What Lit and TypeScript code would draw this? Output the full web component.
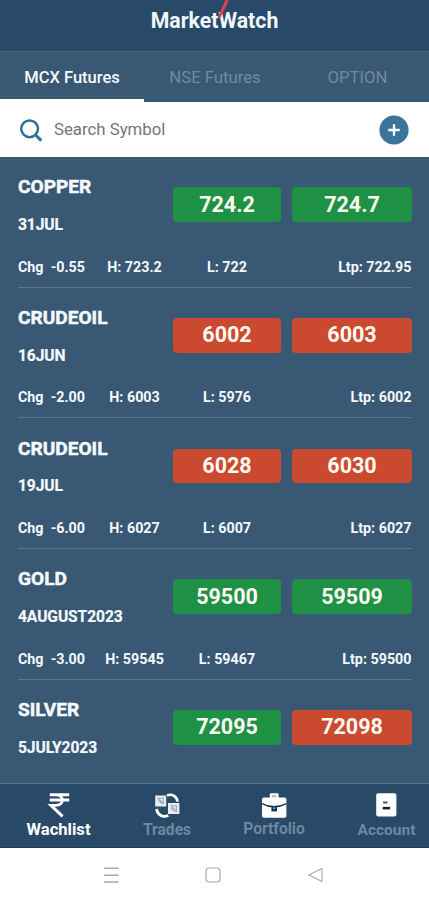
import { LitElement, html, css, svg } from "lit";
import { customElement, property } from "lit/decorators.js";
import { classMap } from "lit/directives/class-map.js";

interface Quote {
  symbol: string;
  expiry: string;
  bid: string;
  ask: string;
  bidUp: boolean;
  askUp: boolean;
  chg: string;
  high: string;
  low: string;
  ltp: string;
}

const QUOTES: Quote[] = [
  { symbol: "COPPER", expiry: "31JUL", bid: "724.2", ask: "724.7", bidUp: true, askUp: true, chg: "-0.55", high: "723.2", low: "722", ltp: "722.95" },
  { symbol: "CRUDEOIL", expiry: "16JUN", bid: "6002", ask: "6003", bidUp: false, askUp: false, chg: "-2.00", high: "6003", low: "5976", ltp: "6002" },
  { symbol: "CRUDEOIL", expiry: "19JUL", bid: "6028", ask: "6030", bidUp: false, askUp: false, chg: "-6.00", high: "6027", low: "6007", ltp: "6027" },
  { symbol: "GOLD", expiry: "4AUGUST2023", bid: "59500", ask: "59509", bidUp: true, askUp: true, chg: "-3.00", high: "59545", low: "59467", ltp: "59500" },
  { symbol: "SILVER", expiry: "5JULY2023", bid: "72095", ask: "72098", bidUp: true, askUp: false, chg: "", high: "", low: "", ltp: "" },
];

@customElement("quote-row")
export class QuoteRow extends LitElement {
  @property({ attribute: false }) quote!: Quote;

  static styles = css`
    :host {
      display: block;
      flex: none;
      box-sizing: border-box;
      height: 130.67px;
      padding: 0 17.5px 0 18px;
      color: #f4f9fd;
      font-weight: 700;
    }
    .row {
      height: 100%;
      box-sizing: border-box;
      border-bottom: 1px solid #587591;
      display: flex;
      flex-direction: column;
    }
    .top {
      display: grid;
      grid-template-columns: 155.3px 107.4px 131px;
      height: 97.7px;
      padding-top: 18.4px;
      box-sizing: border-box;
    }
    .symbol {
      font-size: 19.1px;
      line-height: 24px;
      -webkit-text-stroke: 0.5px #f4f9fd;
    }
    .expiry {
      font-size: 15.6px;
      line-height: 20px;
      margin-top: 15.6px;
      letter-spacing: -0.08px;
      -webkit-text-stroke: 0.2px #f4f9fd;
    }
    .price {
      margin-top: 12.1px;
      height: 34.6px;
      border-radius: 4px;
      background: #cb4a2f;
      display: flex;
      align-items: center;
      justify-content: center;
      font-size: 21.5px;
      line-height: 26px;
      color: #fdfaf4;
    }
    .ask {
      margin-left: 11.6px;
    }
    .up {
      background: #1e9145;
    }
    .stats {
      display: grid;
      grid-template-columns: 70px 93px 92px 1fr;
      font-size: 14.3px;
      line-height: 24px;
      white-space: pre;
    }
    .mid {
      text-align: center;
    }
    .ltp {
      text-align: right;
    }
  `;

  render() {
    const q = this.quote;
    return html`
      <div class="row">
        <div class="top">
          <div>
            <div class="symbol">${q.symbol}</div>
            <div class="expiry">${q.expiry}</div>
          </div>
          <div class=${classMap({ price: true, up: q.bidUp })}>${q.bid}</div>
          <div class=${classMap({ price: true, ask: true, up: q.askUp })}>${q.ask}</div>
        </div>
        ${q.chg
          ? html`<div class="stats">
              <span>Chg  ${q.chg}</span><span class="mid">H: ${q.high}</span><span class="mid">L: ${q.low}</span><span class="ltp">Ltp: ${q.ltp}</span>
            </div>`
          : null}
      </div>
    `;
  }
}

const rupee = svg`<path d="M3.7 1.8H23.2M3.7 7H23.2M3.7 1.8H10C18.4 1.8 18.4 12.4 10 12.4H5L16.6 23.4" fill="none" stroke="#fff" stroke-width="2.9"/>`;

const trades = svg`
  <path d="M13 2.4C18 .4 23 3.4 23.6 8.6M2.6 16C3.2 21.6 8.5 25 14.4 22.4" fill="none" stroke="#fff" stroke-width="2.7"/>
  <path d="M1.2 2.6H12.2V13.4H1.2ZM14 10H25.4V21H14Z" fill="#e8edf2"/>
  <path d="M4 5.2H9.4V10.4ZM4.2 7.4L8.4 11.2M17 12.8H22.4V18.2ZM17 15L21 18.8" fill="none" stroke="#9aa9b8" stroke-width="1.1"/>`;

const briefcase = svg`
  <path d="M8.8 4.5V1.2Q8.8.2 9.8.2H16.6Q17.6.2 17.6 1.2V4.5H23.6Q25.4 4.5 25.4 6.3V23Q25.4 24.8 23.6 24.8H2.8Q1 24.8 1 23V6.3Q1 4.5 2.8 4.5Z" fill="#fff"/>
  <path d="M10.8 2.2H15.6V4.2H10.8Z" fill="#aebac6"/>
  <path d="M1 10.6Q7 13.8 13.2 13.8T25.4 10.6" fill="none" stroke="#1c3753" stroke-width="1.4"/>
  <path d="M10.4 13.2H16V18.4H10.4Z" fill="#163653"/>
  <path d="M12.2 14.4H14.2V16H12.2Z" fill="#9aabba"/>`;

const account = svg`
  <rect x="2.2" y=".2" width="20.2" height="23.2" rx="2" fill="#fff"/>
  <path d="M9.1 8.4H13.5V10.6H9.1Z" fill="#53616f"/>
  <path d="M8.7 13.9H16.1V16.4H8.7Z" fill="#14202c"/>`;

@customElement("app-root")
export class AppRoot extends LitElement {
  static styles = css`
    :host {
      display: flex;
      flex-direction: column;
      position: relative;
      width: 429px;
      height: 900px;
      overflow: hidden;
      background: #395873;
      font-family: Roboto, "Liberation Sans", sans-serif;
    }
    .header {
      flex: none;
      height: 52px;
      background: #284967;
      border-bottom: 1px solid #466582;
      box-sizing: border-box;
      text-align: center;
      color: #eff8fd;
      font-size: 21.3px;
      line-height: 42px;
      font-weight: 700;
    }
    .mark {
      position: absolute;
      left: 212px;
      top: 0;
      width: 20px;
      height: 20px;
    }
    .tabs {
      flex: none;
      height: 50px;
      display: grid;
      grid-template-columns: 144px 142px 143px;
    }
    .tab {
      box-sizing: border-box;
      height: 50px;
      text-align: center;
      font-size: 16.7px;
      line-height: 51px;
      color: #6f8aa3;
      border-bottom: 3.5px solid transparent;
    }
    .active {
      color: #f6fbfe;
      border-bottom-color: #fff;
      font-size: 16.5px;
      font-weight: 500;
    }
    .search {
      flex: none;
      height: 55px;
      background: #fff;
      display: flex;
      align-items: center;
      padding: 0 20.5px 0 19px;
    }
    .glass {
      width: 24px;
      height: 24px;
    }
    .hint {
      flex: 1;
      margin-left: 11px;
      margin-bottom: 2px;
      font-size: 16.8px;
      color: #757575;
    }
    .add {
      width: 30px;
      height: 30px;
      margin-top: 1px;
    }
    .list {
      flex: none;
      height: 626px;
      overflow: hidden;
      display: flex;
      flex-direction: column;
    }
    .nav {
      flex: none;
      height: 65px;
      box-sizing: border-box;
      background: #284967;
      border-top: 1px solid #56738d;
      border-bottom: 1px solid #1b3a5b;
      display: grid;
      grid-template-columns: 117px 100px 114px 1fr;
    }
    .item {
      display: flex;
      flex-direction: column;
      align-items: center;
      padding-top: 9px;
      font-size: 15.6px;
      line-height: 20px;
      font-weight: 700;
      color: #6d88a1;
    }
    .item svg {
      width: 26px;
      height: 26px;
      flex: none;
    }
    .current {
      color: #fff;
      font-size: 16.6px;
    }
    .last {
      padding-left: 13px;
      font-size: 15.5px;
    }
    .current,
    .trades,
    .last {
      line-height: 22px;
    }
    .system {
      flex: none;
      height: 52px;
      background: #fff;
      display: grid;
      grid-template-columns: 162px 102px 102px;
      align-items: center;
    }
    .system svg {
      width: 18px;
      height: 18px;
      justify-self: center;
      margin-top: 1px;
    }
    .system .menu {
      margin-left: 60px;
    }
  `;

  render() {
    return html`
      <div class="header">MarketWatch</div>
      <svg class="mark" viewBox="0 0 20 20"><path d="M15.6 -1L7.4 17" stroke="#e33f4d" stroke-width="3" /></svg>
      <div class="tabs">
        <div class="tab active">MCX Futures</div>
        <div class="tab">NSE Futures</div>
        <div class="tab">OPTION</div>
      </div>
      <div class="search">
        <svg class="glass" viewBox="0 0 24 24">
          <circle cx="10.6" cy="10.8" r="8.4" fill="none" stroke="#2f7097" stroke-width="2.5" />
          <path d="M16.6 17L22.3 22.6" stroke="#2f7097" stroke-width="3" />
        </svg>
        <span class="hint">Search Symbol</span>
        <svg class="add" viewBox="0 0 30 30">
          <circle cx="15" cy="15" r="14.6" fill="#3b7499" />
          <path d="M9.3 15H20.7M15 9.3V20.7" stroke="#fff" stroke-width="2.3" />
        </svg>
      </div>
      <div class="list">${QUOTES.map((q) => html`<quote-row .quote=${q}></quote-row>`)}</div>
      <div class="nav">
        <div class="item current"><svg viewBox="0 0 26 26">${rupee}</svg>Wachlist</div>
        <div class="item trades"><svg viewBox="0 0 26 26">${trades}</svg>Trades</div>
        <div class="item"><svg viewBox="0 0 26 26">${briefcase}</svg>Portfolio</div>
        <div class="item last"><svg viewBox="0 0 26 26">${account}</svg>Account</div>
      </div>
      <div class="system">
        <svg class="menu" viewBox="0 0 18 18"><path d="M2 2.2H16.5M2 9.2H16.5M2 16H16.5" stroke="#a9a9a9" stroke-width="1.4" /></svg>
        <svg viewBox="0 0 18 18"><rect x="2" y="2" width="14" height="14" rx="3" fill="none" stroke="#a9a9a9" stroke-width="1.2" /></svg>
        <svg viewBox="0 0 18 18"><path d="M16 2.6V15.6L2.8 9.1Z" fill="none" stroke="#a9a9a9" stroke-width="1.1" stroke-linejoin="round" /></svg>
      </div>
    `;
  }
}
